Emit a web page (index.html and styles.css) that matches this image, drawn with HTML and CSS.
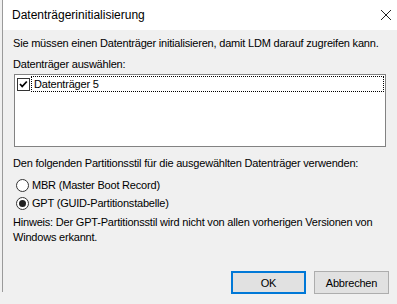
FILE: index.html
```html
<!DOCTYPE html>
<html lang="de">
<head>
  <meta charset="UTF-8" />
  <title>Datenträgerinitialisierung</title>
  <link rel="stylesheet" href="styles.css">
</head>
<body>

<div class="window">

  <!-- TITLE BAR -->
  <div class="titlebar">
    <span class="title">Datenträgerinitialisierung</span>
    <svg class="close" width="12" height="12" viewBox="0 0 12 12">
      <path d="M1 1 L11 11 M11 1 L1 11" stroke="#222" stroke-width="1" fill="none"/>
    </svg>
  </div>

  <!-- CONTENT -->
  <div class="content">
    <p class="intro">Sie müssen einen Datenträger initialisieren, damit LDM darauf zugreifen kann.</p>

    <p class="label">Datenträger auswählen:</p>
    <div class="listbox">
      <div class="list-item">
        <span class="checkbox">
          <svg width="11" height="11" viewBox="0 0 11 11">
            <path d="M2 5 L4.2 7.5 L8.8 2.5" stroke="#000" stroke-width="1.8" fill="none"/>
          </svg>
        </span>
        <span class="focus">Datenträger 5</span>
      </div>
    </div>

    <p class="label style-label">Den folgenden Partitionsstil für die ausgewählten Datenträger verwenden:</p>

    <div class="radios">
      <div class="radio-row"><span class="radio"></span>MBR (Master Boot Record)</div>
      <div class="radio-row"><span class="radio checked"></span>GPT (GUID-Partitionstabelle)</div>
    </div>

    <p class="hint">Hinweis: Der GPT-Partitionsstil wird nicht von allen vorherigen Versionen von<br>Windows erkannt.</p>

    <div class="buttons">
      <button class="btn default">OK</button>
      <button class="btn">Abbrechen</button>
    </div>
  </div>

</div>

</body>
</html>
```

FILE: styles.css
```css
*{
  margin:0;
  padding:0;
  box-sizing:border-box;
  font-family:"Liberation Sans", Arial, sans-serif;
}

body{
  background:#f0f0f0;
  color:#000;
  font-size:11px;
  letter-spacing:-0.2px;
  width:397px;
  height:304px;
  overflow:hidden;
}

.window{
  margin-left:2px;
  border-left:1px solid #9a9a9a;
  height:292px;
  background:#f0f0f0;
}

.titlebar{
  background:#fff;
  height:30px;
  display:flex;
  align-items:center;
  justify-content:space-between;
  padding:0 5px 0 9px;
  letter-spacing:0;
}

.title{
  font-size:12px;
  color:#000;
}

.close{
  margin-top:-1px;
}

.content{
  padding:0 8px 0 10px;
}

.intro{
  line-height:15px;
  margin-top:6px;
}

.label{
  line-height:15px;
  margin-top:6px;
}

.listbox{
  margin:2px 0 0 1px;
  width:372px;
  height:73px;
  background:#fff;
  border:1px solid #828282;
  padding:1px 1px 0 2px;
}

.list-item{
  display:flex;
  align-items:center;
  gap:1px;
}

.checkbox{
  width:13px;
  height:13px;
  border:1px solid #333;
  background:#fff;
  display:flex;
  align-items:center;
  justify-content:center;
}

.focus{
  flex:1;
  border:1px dotted #000;
  line-height:14px;
  padding-left:2px;
}

.style-label{
  margin-top:9px;
}

.radios{
  margin-top:5px;
}

.radio-row{
  display:flex;
  align-items:center;
  gap:3px;
  height:18px;
  padding-left:3px;
}

.radio{
  width:13px;
  height:13px;
  border:1px solid #333;
  border-radius:50%;
  background:#fff;
  display:flex;
  align-items:center;
  justify-content:center;
}

.radio.checked::after{
  content:"";
  width:7px;
  height:7px;
  border-radius:50%;
  background:#222;
}

.hint{
  line-height:15px;
  margin-top:3px;
}

.buttons{
  display:flex;
  justify-content:flex-end;
  gap:8px;
  margin-top:26px;
}

.btn{
  width:75px;
  height:23px;
  background:#e1e1e1;
  border:1px solid #adadad;
  font-size:11px;
  letter-spacing:-0.2px;
  color:#000;
}

.btn.default{
  border:2px solid #0078d7;
}
```
